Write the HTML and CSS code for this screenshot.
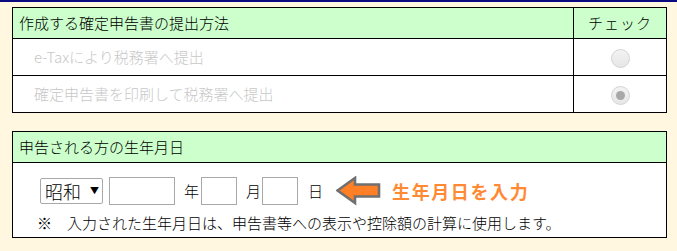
FILE: index.html
```html
<!DOCTYPE html>
<html lang="ja">
<head>
<meta charset="utf-8">
<title>提出方法</title>
<link rel="stylesheet" href="styles.css">
</head>
<body>
<div class="page">
  <table class="grid method">
    <thead>
      <tr>
        <th class="head-main">作成する確定申告書の提出方法</th>
        <th class="head-check">チェック</th>
      </tr>
    </thead>
    <tbody>
      <tr>
        <td class="opt">e-Taxにより税務署へ提出</td>
        <td class="chk"><span class="radio"></span></td>
      </tr>
      <tr>
        <td class="opt">確定申告書を印刷して税務署へ提出</td>
        <td class="chk"><span class="radio checked"></span></td>
      </tr>
    </tbody>
  </table>

  <table class="grid birth">
    <thead>
      <tr><th class="head-main">申告される方の生年月日</th></tr>
    </thead>
    <tbody>
      <tr>
        <td class="birth-body">
          <div class="date-row">
            <span class="era">昭和<span class="caret">▼</span></span>
            <span class="box box-year"></span>
            <span class="unit u-year">年</span>
            <span class="box box-small"></span>
            <span class="unit u-month">月</span>
            <span class="box box-small"></span>
            <span class="unit u-day">日</span>
            <svg class="arrow" width="46" height="30" viewBox="0 0 46 30">
              <path d="M1.5 14.5 L19 2 L19 8.5 L43 8.5 L43 20.5 L19 20.5 L19 27 Z" fill="#ff7f27" stroke="#707070" stroke-width="2.6" stroke-linejoin="miter"/>
            </svg>
            <span class="hint">生年月日を入力</span>
          </div>
          <p class="note">※　入力された生年月日は、申告書等への表示や控除額の計算に使用します。</p>
        </td>
      </tr>
    </tbody>
  </table>
</div>
</body>
</html>
```
FILE: styles.css
```css
html, body {
  margin: 0;
  padding: 0;
}
body {
  background: #fff7df;
  border-top: 2px solid #0a0a80;
  font-family: "Noto Sans CJK JP", "Noto Sans", sans-serif;
  font-size: 15px;
  font-weight: 300;
  color: #000;
}
.page {
  padding: 5px 10px 0 12px;
}
.grid {
  width: 655px;
  border-collapse: collapse;
  background: #fff;
}
.grid th, .grid td {
  border: 1px solid #000;
  padding: 0;
}
.grid th {
  background: #ccffcc;
  font-weight: 300;
  height: 30px;
  line-height: 20px;
}
.head-main {
  text-align: left;
  padding-left: 6px !important;
}
.head-check {
  width: 92px;
  text-align: center;
  letter-spacing: 1px;
}
.opt {
  height: 36px;
  color: #c8c8c8;
  padding-left: 21px !important;
  line-height: 20px;
}
.chk {
  text-align: center;
}
.radio {
  display: inline-block;
  width: 17px;
  height: 17px;
  border: 1px solid #d4d4d4;
  border-radius: 50%;
  background: linear-gradient(#f3f3f3, #e6e6e6);
  vertical-align: middle;
  position: relative;
}
.radio.checked::after {
  content: "";
  position: absolute;
  left: 4px;
  top: 4px;
  width: 9px;
  height: 9px;
  border-radius: 50%;
  background: #a8a8a8;
}
.birth {
  margin-top: 18px;
}
.birth-body {
  height: 75px;
  box-sizing: border-box;
  padding: 13px 0 0 24px !important;
  vertical-align: top;
}
.date-row {
  display: flex;
  align-items: center;
  height: 30px;
  margin-left: 3px;
}
.era {
  display: inline-flex;
  align-items: center;
  box-sizing: border-box;
  width: 63px;
  height: 26px;
  border: 1px solid #a9a9a9;
  border-radius: 2px;
  padding-left: 4px;
  font-size: 18px;
  line-height: 24px;
}
.caret {
  font-size: 9px;
  margin-left: 9px;
}
.box {
  box-sizing: border-box;
  height: 28px;
  border: 1px solid #a9a9a9;
  background: #fff;
}
.box-year {
  width: 66px;
  margin-left: 6px;
}
.box-small {
  width: 36px;
}
.unit {
  line-height: 20px;
}
.u-year {
  margin: 0 2px 0 9px;
}
.u-month {
  margin: 0 1px 0 9px;
}
.u-day {
  margin: 0 13px 0 10px;
}
.arrow {
  display: block;
}
.hint {
  margin-left: 10px;
  font-size: 18px;
  font-weight: bold;
  color: #ff8a33;
  letter-spacing: 1.6px;
  line-height: 24px;
}
.note {
  margin: 6px 0 0 0;
  line-height: 22px;
}
```
